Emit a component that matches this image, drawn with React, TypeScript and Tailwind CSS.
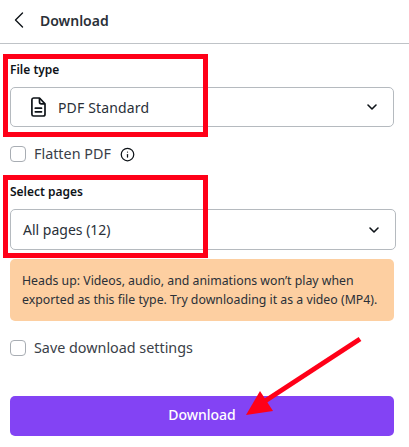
import { ChevronDown, ChevronLeft, Info } from "lucide-react";

const font = "font-['Noto_Sans',sans-serif]";

// file glyph used in the first select
const FileIcon = () => (
  <svg width="15" height="20" viewBox="0 0 15 20" fill="none" stroke="#0e1318" strokeWidth="1.7" strokeLinejoin="round">
    <path d="M2.6 1h5.9L14 6.8v10.4a1.8 1.8 0 0 1-1.8 1.8H2.6A1.8 1.8 0 0 1 .9 17.2V2.8A1.8 1.8 0 0 1 2.6 1z" />
    <path d="M8.5 1v3.9c0 1.1.9 1.9 1.9 1.9H14" />
    <path d="M4.3 11.2h6.2M4.3 14.8h6.2" strokeLinecap="round" />
  </svg>
);

const Check = ({ label, info }: { label: string; info?: boolean }) => (
  <div className="flex items-center gap-2">
    <div className="w-4 h-4 rounded-[4px] border border-[#a8adb3] bg-white" />
    <span className="text-[14.35px] leading-5 text-[#3a4048]">{label}</span>
    {info && <Info size={15} strokeWidth={2} className="ml-[1px] text-[#0e1318]" />}
  </div>
);

export default function App() {
  return (
    <div className={`${font} relative w-[409px] h-[447px] bg-white overflow-hidden`}>
      <div className="h-[44px] border-b border-[#bfc3c7] flex items-center pl-[5px] pb-[3px]">
        <ChevronLeft size={28} strokeWidth={1.2} className="text-[#0e1318]" />
        <span className="ml-[7px] text-[14px] font-semibold text-[#2a3038]">Download</span>
      </div>

      <div className="pl-[10px] pr-[15px]">
        <div className="mt-[18px] text-[12px] leading-4 font-semibold text-[#0e1318]">File type</div>
        <div className="mt-[9px] h-[40px] rounded-[5px] border border-[#b5babf] flex items-center pl-[20px] pr-[13px]">
          <FileIcon />
          <span className="ml-[12px] text-[14px] text-[#2a3038] tracking-[0.15px]">PDF Standard</span>
          <ChevronDown size={16} strokeWidth={2.4} className="ml-auto text-[#0e1318]" />
        </div>

        <div className="mt-[17px]">
          <Check label="Flatten PDF" info />
        </div>

        <div className="mt-[20px] text-[12px] leading-4 font-semibold text-[#0e1318]">Select pages</div>
        <div className="mt-[9px] -mr-[2px] h-[41px] rounded-[5px] border border-[#b5babf] flex items-center pl-[12px] pr-[13px]">
          <span className="text-[14px] text-[#2a3038]">All pages (12)</span>
          <ChevronDown size={16} strokeWidth={2.4} className="ml-auto text-[#0e1318]" />
        </div>

        <div className="mt-[9px] h-[62px] rounded-[5px] bg-[#fdcfa1] pl-[12px] pt-[12px] text-[12.3px] leading-[19px] text-[#2a3038] whitespace-nowrap">
          Heads up: Videos, audio, and animations won’t play when
          <br />
          exported as this file type. Try downloading it as a video (MP4).
        </div>

        <div className="mt-[17px]">
          <Check label="Save download settings" />
        </div>

        <button className="mt-[38px] w-full h-[40px] pb-[3px] rounded-[5px] bg-[#8343f4] text-white text-[14px] font-medium">
          Download
        </button>
      </div>

      {/* annotations drawn over the screenshot */}
      <div className="absolute left-[3px] top-[54px] w-[205px] h-[83px] border-[5px] border-[#ff0018]" />
      <div className="absolute left-[3px] top-[175px] w-[205px] h-[83px] border-[5px] border-[#ff0018]" />
      <svg className="absolute left-0 top-0" width="409" height="447" viewBox="0 0 409 447">
        <path d="M360 339 L262 403" stroke="#ff0018" strokeWidth="5" />
        <path d="M246 415 L260 391 L273 411 Z" fill="#ff0018" />
      </svg>
    </div>
  );
}
